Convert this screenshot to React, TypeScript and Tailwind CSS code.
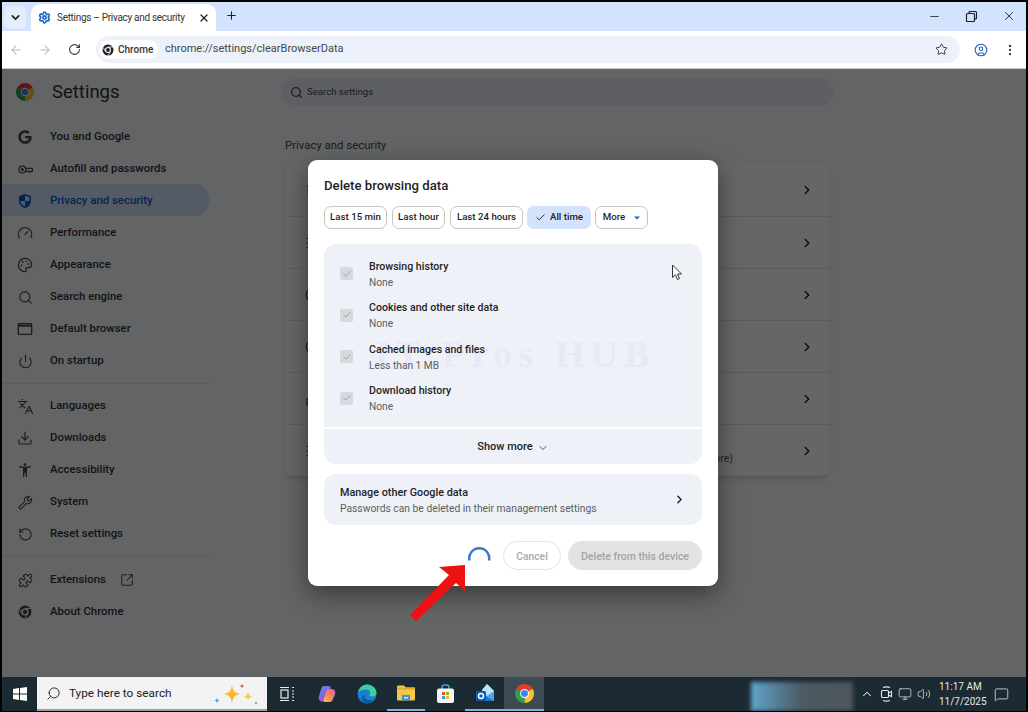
import {
  ArrowLeft, ArrowRight, Check, ChevronDown, ChevronRight, ChevronUp, CircleUser, Compass, Cookie, Download, Gauge,
  Languages, Lock, MessageSquare, Minus, Monitor, MoreVertical, Palette, Plus, Power, Puzzle, RotateCcw, RotateCw, Search, Settings,
  SlidersHorizontal, SquareArrowOutUpRight, Star, Trash2, Volume2, Wrench, X,
} from 'lucide-react';
import { FaGoogle } from 'react-icons/fa';

const ChromeColor = ({ size = 18 }: { size?: number }) => (
  <svg width={size} height={size} viewBox="0 0 24 24">
    <path d="M12 12 22.39 6A12 12 0 0 0 1.61 6Z" fill="#e33b2e" />
    <path d="M12 12 12 24A12 12 0 0 0 22.39 6Z" fill="#fbc02d" />
    <path d="M12 12 1.61 6A12 12 0 0 0 12 24Z" fill="#2e9e4f" />
    <circle cx="12" cy="12" r="5.6" fill="#fff" />
    <circle cx="12" cy="12" r="4.4" fill="#3f83e6" />
  </svg>
);

const ChromeMono = ({ size = 14, color = '#1f1f1f' }: { size?: number; color?: string }) => (
  <svg width={size} height={size} viewBox="0 0 24 24">
    <circle cx="12" cy="12" r="11" fill={color} />
    <circle cx="12" cy="12" r="6" fill="#fff" />
    <circle cx="12" cy="12" r="3.8" fill={color} />
    <path d="M12 6h10M7 15 2.5 7M17 15l-5 8" stroke="#fff" strokeWidth="1.6" />
  </svg>
);

const KeyIcon = () => (
  <svg width="15" height="15" viewBox="0 0 24 24" fill="none" stroke="currentColor" strokeWidth="2">
    <circle cx="7" cy="12" r="5.5" />
    <circle cx="7" cy="12" r="1.4" fill="currentColor" />
    <path d="M12.5 10H23v5h-3l-1.5 1.5L17 15h-4.5" />
  </svg>
);

const ShieldIcon = () => (
  <svg width="16" height="16" viewBox="0 0 24 24">
    <path d="M12 1.5 3 5v6.500c0 5.400 3.800 9.600 9 11 5.200-1.400 9-5.600 9-11V5Z" fill="#0b57d0" />
    <path d="M12 3.800V12h6.900V6.400Z" fill="#d3e3fd" />
    <path d="M12 12H5.100c.5 3.800 3.200 6.800 6.900 8Z" fill="#d3e3fd" />
  </svg>
);

const BrowserIcon = () => (
  <svg width="16" height="16" viewBox="0 0 24 24" fill="none" stroke="currentColor" strokeWidth="2">
    <rect x="2" y="4" width="20" height="16" rx="1" />
    <path d="M2 7h20" strokeWidth="3" />
  </svg>
);

const PersonIcon = () => (
  <svg width="16" height="16" viewBox="0 0 24 24" fill="currentColor">
    <path d="M20.500 6c-2.610.7-5.670 1-8.500 1s-5.890-.3-8.500-1L3 8c1.860.5 4 .83 6 1v13h2v-6h2v6h2V9c2-.17 4.140-.5 6-1l-.5-2zM12 6c1.100 0 2-.9 2-2s-.9-2-2-2-2 .9-2 2 .9 2 2 2z" />
  </svg>
);

const TaskView = () => (
  <svg width="16" height="16" viewBox="0 0 16 16" fill="none" stroke="#e8e8e8" strokeWidth="1.200">
    <path d="M1 1.500h9M1 14.500h9" />
    <rect x="2" y="4" width="7" height="8" />
    <path d="M13 1.500h2M13 14.500h2M13 5h2M13 8h2M13 11h2" />
  </svg>
);

const MeetIcon = () => (
  <svg width="13" height="16" viewBox="0 0 13 16" fill="none" stroke="#e8e8e8" strokeWidth="1.100">
    <path d="M3 1.500q3.500-1.200 7 0M3 14.500q3.500 1.200 7 0" />
    <rect x="1.500" y="4.500" width="7" height="7" rx="1" />
    <path d="M8.500 7 11.500 5.500V10.500L8.500 9" />
  </svg>
);

const Copilot = () => (
  <svg width="20" height="20" viewBox="0 0 20 20">
    <defs>
      <linearGradient id="cop1" x1="0" y1="0" x2="1" y2="1">
        <stop offset="0" stopColor="#3fa7e8" />
        <stop offset="0.5" stopColor="#8a5fe0" />
        <stop offset="1" stopColor="#e0609a" />
      </linearGradient>
      <linearGradient id="cop2" x1="0" y1="1" x2="1" y2="0">
        <stop offset="0" stopColor="#f7c440" />
        <stop offset="0.6" stopColor="#ee7c6a" />
        <stop offset="1" stopColor="#c95fd0" />
      </linearGradient>
    </defs>
    <path d="M7 2h5c1 0 1.500.6 1.800 1.500L11 15c-.4 1.400-1.500 2.500-3 2.500H5C2.500 17.500 1 15 2 12L4.500 4C5 2.800 5.800 2 7 2Z" fill="url(#cop1)" />
    <path d="M10 5h5c2.500 0 4 2.500 3 5.500L15.500 16c-.4 1.200-1.300 2-2.500 2H8c-1 0-1.500-.6-1.500-1.500Z" fill="url(#cop2)" />
  </svg>
);

const Edge = () => (
  <svg width="20" height="20" viewBox="0 0 20 20">
    <circle cx="10" cy="10" r="9.500" fill="#1a7fd0" />
    <path d="M1 9C2 3 7 .5 10 .5c5 0 9.500 4 9.500 8.500 0 2.500-2 3.500-4 3.500-2 0-3-.7-3.200-1.500C14 9 13 5.500 9.500 5.500 5 5.500 2 7 1 9Z" fill="#3ccf9a" />
    <path d="M7 11c0 3 2.500 5 5.500 5 1.500 0 2.500-.3 3.500-.8-1.500 3-4 4.300-6 4.300-4 0-6-4-5-7 .5-1.200 1.300-1.500 2-1.500Z" fill="#0c59a4" />
  </svg>
);

const Explorer = () => (
  <svg width="20" height="18" viewBox="0 0 20 18">
    <path d="M1 3c0-1 .6-1.500 1.500-1.500H8L10 3.500h7.500c1 0 1.500.6 1.500 1.500v10c0 1-.6 1.500-1.500 1.500h-15C1.600 16.500 1 16 1 15Z" fill="#f2c94c" />
    <rect x="1" y="3.500" width="18" height="2" fill="#e2ab2a" />
    <rect x="6" y="11" width="8" height="5.500" fill="#3f93c4" />
    <rect x="8" y="13" width="4" height="1.500" fill="#cfe6f2" />
  </svg>
);

const Store = () => (
  <svg width="19" height="20" viewBox="0 0 19 20">
    <path d="M6 5V3.500C6 2 7 1 8.500 1h2C12 1 13 2 13 3.500V5" fill="none" stroke="#39a8d8" strokeWidth="1.500" />
    <rect x="1" y="4.500" width="17" height="14.500" rx="2" fill="#f4f4f4" />
    <rect x="6" y="8" width="3" height="3" fill="#e8502f" />
    <rect x="10" y="8" width="3" height="3" fill="#7fba2a" />
    <rect x="6" y="12" width="3" height="3" fill="#2b9fe0" />
    <rect x="10" y="12" width="3" height="3" fill="#f8b81c" />
  </svg>
);

const Outlook = () => (
  <svg width="20" height="20" viewBox="0 0 20 20">
    <path d="M12 1 19 8v10H7V7Z" fill="#49a6e8" />
    <path d="M12 1 19 8l-7 5-5-6Z" fill="#bfe3f8" />
    <path d="M7 11 19 18H7Z" fill="#1877c9" />
    <rect x="1" y="8" width="10" height="10" rx="1.500" fill="#0c5fae" />
    <circle cx="6" cy="13" r="2.500" fill="none" stroke="#fff" strokeWidth="1.400" />
  </svg>
);

const Sparkles = () => (
  <svg width="52" height="28" viewBox="0 0 52 28">
    <path d="M21 6c1 6 3 8 8 9-5 1-7 3-8 9-1-6-3-8-8-9 5-1 7-3 8-9Z" fill="#f8b82e" />
    <path d="M37 13c.5 3 1.500 4 4.500 4.500C38.500 18 37.500 19 37 22c-.5-3-1.500-4-4.500-4.500C35.500 17 36.500 16 37 13Z" fill="#f5c94e" />
    <path d="M6 18.500c.3 2 1 2.700 3 3-2 .3-2.700 1-3 3-.3-2-1-2.700-3-3 2-.3 2.700-1 3-3Z" fill="#3aa0e0" />
    <circle cx="31" cy="7" r="1.500" fill="#d9673f" />
    <circle cx="45" cy="24" r="1.300" fill="#8cc06a" />
  </svg>
);

const nav = [
  { label: 'You and Google', icon: <FaGoogle size={14} /> },
  { label: 'Autofill and passwords', icon: <KeyIcon /> },
  { label: 'Privacy and security', icon: <ShieldIcon />, active: true },
  { label: 'Performance', icon: <Gauge size={16} strokeWidth={1.750} /> },
  { label: 'Appearance', icon: <Palette size={16} strokeWidth={1.750} /> },
  { label: 'Search engine', icon: <Search size={15} strokeWidth={1.750} /> },
  { label: 'Default browser', icon: <BrowserIcon /> },
  { label: 'On startup', icon: <Power size={15} strokeWidth={1.750} /> },
];
const nav2 = [
  { label: 'Languages', icon: <Languages size={17} strokeWidth={1.500} /> },
  { label: 'Downloads', icon: <Download size={16} strokeWidth={1.750} /> },
  { label: 'Accessibility', icon: <PersonIcon /> },
  { label: 'System', icon: <Wrench size={15} strokeWidth={1.750} /> },
  { label: 'Reset settings', icon: <RotateCcw size={15} strokeWidth={1.750} /> },
];

const rowIcons = [Trash2, SlidersHorizontal, Cookie, Compass, Lock, SlidersHorizontal];

const NavItem = ({ label, icon, active, extra }: { label: string; icon: React.ReactNode; active?: boolean; extra?: React.ReactNode }) => (
  <div className={`flex h-8 w-[208px] items-center gap-4 rounded-r-full pt-[2px] pl-[14px] text-[11.4px] font-medium ${active ? 'bg-[#d3e3fd] text-[#0b57d0]' : 'text-[#333]'}`}>
    <span className={`flex w-[18px] justify-center ${active ? '' : 'text-[#474747]'}`}>{icon}</span>
    {label}
    {extra}
  </div>
);

const Chip = ({ children, active, className }: { children: React.ReactNode; active?: boolean; className?: string }) => (
  <div className={`flex h-[23px] items-center justify-center rounded-[7px] text-[9.7px] font-medium text-[#1f1f1f] ${active ? 'bg-[#d3e3fd]' : 'border border-[#c4c7c5]'} ${className ?? ''}`}>
    {children}
  </div>
);

const DataRow = ({ title, sub }: { title: string; sub: string }) => (
  <div className="flex h-[41.5px] items-center pl-4">
    <div className="flex h-[13px] w-[13px] items-center justify-center rounded-[2px] bg-[#d6d9de]">
      <Check size={10} strokeWidth={1.500} className="text-[#7d7f83]" />
    </div>
    <div className="ml-4 pt-[2px] leading-4">
      <div className="text-[10.6px] font-medium text-[#1f1f1f]">{title}</div>
      <div className="text-[10.2px] text-[#5c5e60]">{sub}</div>
    </div>
  </div>
);

const App = () => {
  return (
    <div className="relative flex h-[712px] w-[1028px] flex-col overflow-hidden bg-black px-[2px] pt-[2px] pb-[1px] font-['Roboto',sans-serif]">
      {/* Tab strip */}
      <div className="flex h-[29px] shrink-0 items-end bg-[#d3e3fd] text-[#1f1f1f]">
        <div className="mb-[2px] ml-[2px] flex h-[23px] w-[22px] items-center justify-center rounded-md bg-[#e4edfd]">
          <ChevronDown size={13} strokeWidth={3} />
        </div>
        <div className="ml-[5px] flex h-[27px] w-[185px] items-center rounded-t-[9px] bg-white pr-[6px] pl-[7px]">
          <Settings size={13} strokeWidth={3} className="shrink-0 text-[#1a66c9]" />
          <span className="ml-[6px] flex-1 text-[10px] tracking-[-0.3px] whitespace-nowrap text-[#333]">Settings – Privacy and security</span>
          <X size={12} strokeWidth={2.500} className="shrink-0" />
        </div>
        <div className="mb-[9px] ml-[9px]">
          <Plus size={13} strokeWidth={2} />
        </div>
        <div className="mb-[8px] ml-auto flex items-center gap-[24px] pr-[10px]">
          <Minus size={13} strokeWidth={1.500} />
          <svg width="13" height="13" viewBox="0 0 13 13" fill="none" stroke="currentColor" strokeWidth="1.200">
            <rect x="1.500" y="3.500" width="8" height="8" rx="1" />
            <path d="M4 3.500V2.500q0-1 1-1h5.500q1 0 1 1V8q0 1-1 1h-1" />
          </svg>
          <X size={14} strokeWidth={1.500} />
        </div>
      </div>

      {/* Toolbar */}
      <div className="flex h-[38px] shrink-0 items-center border-b border-[#c7c7c7] bg-white">
        <div className="flex w-[94px] items-center pl-[7px] text-[#b4b6b9]">
          <ArrowLeft size={14} strokeWidth={1.750} />
          <ArrowRight size={14} strokeWidth={1.750} className="ml-[15px]" />
          <RotateCw size={13} strokeWidth={2} className="ml-[16px] text-[#3a3a3a]" />
        </div>
        <div className="flex h-[27px] w-[864px] items-center rounded-full bg-[#edf2fa] pr-[12px] pl-[3px]">
          <div className="flex h-[19px] w-[59px] items-center gap-[4px] rounded-full bg-white pl-[3px] text-[10px] font-medium text-[#333]">
            <ChromeMono size={12} />
            Chrome
          </div>
          <span className="ml-[7px] text-[11px] text-[#444746]">chrome://settings/clearBrowserData</span>
          <Star size={13} strokeWidth={1.750} className="ml-auto text-[#333]" />
        </div>
        <CircleUser size={14} strokeWidth={1.750} className="ml-[14px] text-[#1a5fb4]" />
        <MoreVertical size={14} strokeWidth={2} className="ml-[15px] text-[#333]" />
      </div>

      {/* Settings page */}
      <div className="relative flex min-h-0 flex-1 flex-col bg-[#f8fafd]">
        <div className="flex h-[46px] shrink-0 items-center">
          <div className="ml-[14px]">
            <ChromeColor size={18} />
          </div>
          <div className="ml-[18px] w-[229px] pt-[2px] text-[18.5px] text-[#333]">Settings</div>
          <div className="flex h-[28px] w-[553px] items-center rounded-full bg-[#e9eef6] pl-[9px] text-[#474747]">
            <Search size={13} strokeWidth={2.250} />
            <span className="ml-[4px] text-[9.6px]">Search settings</span>
          </div>
        </div>

        <div className="flex min-h-0 flex-1">
          <div className="w-[283px] shrink-0 pt-[5px]">
            {nav.map((n) => (
              <NavItem key={n.label} {...n} />
            ))}
            <div className="mt-[7px] mb-[5px] h-px w-[208px] bg-[#e3e3e3]" />
            {nav2.map((n) => (
              <NavItem key={n.label} {...n} />
            ))}
            <div className="mt-[6px] mb-[7px] h-px w-[208px] bg-[#e3e3e3]" />
            <NavItem
              label="Extensions"
              icon={<Puzzle size={15} strokeWidth={1.750} />}
              extra={<SquareArrowOutUpRight size={14} strokeWidth={1.750} className="-ml-[2px] text-[#474747]" />}
            />
            <NavItem label="About Chrome" icon={<ChromeMono size={14} color="#474747" />} />
          </div>

          <div className="w-[544px] shrink-0 pt-[22px]">
            <div className="text-[11.4px] leading-4 text-[#444746]">Privacy and security</div>
            <div className="mt-[11px] rounded-lg bg-white shadow-md">
              {rowIcons.map((Icon, i) => (
                <div key={i} className={`flex h-[52px] items-center pr-[15px] pl-[20px] ${i ? 'border-t border-[#e3e3e3]' : ''}`}>
                  <Icon size={16} strokeWidth={1.750} className="shrink-0 text-[#474747]" />
                  {i === 5 && (
                    <div className="mt-[16px] ml-[6px] flex w-[406px] justify-end overflow-hidden text-[10.5px] whitespace-nowrap text-[#5e5e5e]">
                      Controls what sites can use and show (location, camera, pop-ups and more)
                    </div>
                  )}
                  <ChevronRight size={14} strokeWidth={2.500} className="ml-auto shrink-0 text-[#1f1f1f]" />
                </div>
              ))}
            </div>
          </div>
        </div>
        <div className="absolute inset-0 bg-black/60" />

        {/* Delete browsing data dialog */}
        <div className="absolute top-[91px] left-[306px] w-[410px] rounded-[9px] bg-white px-4 pt-4 pb-4 shadow-[0_8px_24px_rgba(0,0,0,0.45)]">
          <div className="text-[13.2px] leading-5 font-medium text-[#1f1f1f]">Delete browsing data</div>
          <div className="mt-[10px] flex">
            <Chip className="w-[63px]">Last 15 min</Chip>
            <Chip className="ml-[5px] w-[53px]">Last hour</Chip>
            <Chip className="ml-[5px] w-[73px]">Last 24 hours</Chip>
            <Chip active className="ml-[4px] w-[64px]">
              <Check size={11} strokeWidth={2} className="mr-[4px]" />
              All time
            </Chip>
            <Chip className="ml-[4px] w-[53px]">
              More
              <svg width="6" height="4" viewBox="0 0 6 4" className="ml-[9px]">
                <path d="M0 .5h6L3 3.500Z" fill="#1a66c9" />
              </svg>
            </Chip>
          </div>

          <div className="relative mt-[15px] h-[183px] rounded-t-xl bg-[#eef1f8] pt-[9px]">
            <div className="absolute top-[91px] left-[51px] font-['Liberation_Serif',serif] text-[38px] leading-[38px] font-bold tracking-[6px] whitespace-nowrap text-[#e6e9f6]">
              IT Pros HUB
            </div>
            <div className="relative">
              <DataRow title="Browsing history" sub="None" />
              <DataRow title="Cookies and other site data" sub="None" />
              <DataRow title="Cached images and files" sub="Less than 1 MB" />
              <DataRow title="Download history" sub="None" />
            </div>
          </div>
          <div className="mt-[2px] flex h-[35px] items-center justify-center gap-[4px] rounded-b-xl bg-[#eef1f8] pt-[2px] text-[11px] font-medium text-[#1f1f1f]">
            Show more
            <ChevronDown size={12} strokeWidth={1.500} />
          </div>

          <div className="mt-[10px] flex h-[51px] items-center justify-between rounded-xl bg-[#eef1f8] pr-[16px] pl-4">
            <div className="pt-[2px] leading-4">
              <div className="text-[10.8px] font-medium text-[#1f1f1f]">Manage other Google data</div>
              <div className="text-[10.3px] text-[#5c5e60]">Passwords can be deleted in their management settings</div>
            </div>
            <ChevronRight size={13} strokeWidth={2.500} className="text-[#1f1f1f]" />
          </div>

          <div className="mt-4 flex h-[29px] items-center justify-end">
            <svg width="24" height="16" viewBox="0 0 24 16" fill="none" className="mr-[12px] mb-[3px]">
              <path d="M2.500 14.500A10 10 0 1 1 22 14.500" stroke="#3f78c9" strokeWidth="2.500" />
            </svg>
            <div className="flex h-[29px] w-[58px] items-center justify-center rounded-full border border-[#e3e3e3] pt-[2px] text-[10.3px] font-medium text-[#a9a9a9]">
              Cancel
            </div>
            <div className="ml-[7px] flex h-[29px] w-[134px] items-center justify-center rounded-full bg-[#e3e3e3] pt-[2px] text-[10.5px] font-medium text-[#a3a3a3]">
              Delete from this device
            </div>
          </div>
        </div>
      </div>

      {/* Taskbar */}
      <div className="flex h-[34px] shrink-0 items-stretch overflow-hidden bg-[#1b2a33] text-white">
        <div className="flex w-[35px] items-center justify-center">
          <svg width="14" height="14" viewBox="0 0 14 14" fill="#fff">
            <path d="M0 2 6 1.100V6.500H0ZM7 1 14 0V6.500H7ZM0 7.500H6V12.900L0 12ZM7 7.500H14V14L7 13Z" />
          </svg>
        </div>
        <div className="flex w-[230px] items-center border-b-2 border-[#9aa0a4] bg-[#f3f3f3] pl-[9px] text-[#222]">
          <Search size={15} strokeWidth={1.500} className="-scale-x-100" />
          <span className="ml-[8px] pt-[2px] text-[11.8px]">Type here to search</span>
          <span className="mr-[4px] ml-auto"><Sparkles /></span>
        </div>
        <div className="flex w-[40px] items-center justify-center"><TaskView /></div>
        <div className="flex w-[40px] items-center justify-center"><Copilot /></div>
        <div className="flex w-[40px] items-center justify-center"><Edge /></div>
        <div className="flex w-[38px] items-center justify-center border-b-2 border-[#7db5d8]"><Explorer /></div>
        <div className="flex w-[40px] items-center justify-center"><Store /></div>
        <div className="flex w-[39px] items-center justify-center border-b-2 border-[#7db5d8]"><Outlook /></div>
        <div className="flex w-[40px] items-center justify-center border-b-2 border-[#7db5d8] bg-[#3b4a53]"><ChromeColor size={19} /></div>
        <div className="mt-[5px] ml-[207px] w-[102px] bg-gradient-to-r from-[#5ea6cd] via-[#4b5a63] to-[#50565a] blur-[2px]" />
        <div className="flex items-center pl-[7px] text-[#e8e8e8]">
          <ChevronUp size={14} strokeWidth={1.750} />
          <span className="ml-[6px]"><MeetIcon /></span>
          <Monitor size={14} strokeWidth={1.250} className="ml-[5px]" />
          <Volume2 size={14} strokeWidth={1.250} className="ml-[5px]" />
          <div className="ml-[8px] w-[42px] text-center text-[10px] leading-[15px] whitespace-nowrap">
            <div>11:17 AM</div>
            <div>11/7/2025</div>
          </div>
          <MessageSquare size={15} strokeWidth={1.250} className="ml-[13px]" />
        </div>
      </div>

      {/* Annotation arrow and mouse pointer from the screenshot */}
      <svg className="absolute top-[560px] left-[405px]" width="66" height="66" viewBox="405 560 66 66">
        <path d="M465 565 465 591 456 583 416 621 410 615 449 575 439 567Z" fill="#ee1111" />
      </svg>
      <svg className="absolute top-[264px] left-[671px]" width="12" height="17" viewBox="0 0 12 17">
        <path d="M1.500 1V13.500L4.500 10.800 6.500 15.500 8.500 14.500 6.500 10H10.500Z" fill="#fff" stroke="#333" strokeWidth="1" />
      </svg>
    </div>
  );
};

export default App;
